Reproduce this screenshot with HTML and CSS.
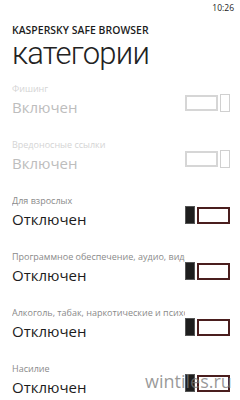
FILE: index.html
```
<!DOCTYPE html>
<html>
<head>
<meta charset="utf-8">
<link rel="stylesheet" href="styles.css">
</head>
<body>
<div class="screen">
  <div class="status">10:26</div>
  <div class="app-title">KASPERSKY SAFE BROWSER</div>
  <div class="page-title">категории</div>
  <div class="list">
    <div class="row disabled">
      <div class="label">Фишинг</div>
      <div class="value">Включен</div>
      <div class="toggle on"><span class="track"></span><span class="thumb"></span></div>
    </div>
    <div class="row disabled">
      <div class="label">Вредоносные ссылки</div>
      <div class="value">Включен</div>
      <div class="toggle on"><span class="track"></span><span class="thumb"></span></div>
    </div>
    <div class="row">
      <div class="label">Для взрослых</div>
      <div class="value">Отключен</div>
      <div class="toggle off"><span class="thumb"></span><span class="track"></span></div>
    </div>
    <div class="row">
      <div class="label">Программное обеспечение, аудио, видео</div>
      <div class="value">Отключен</div>
      <div class="toggle off"><span class="thumb"></span><span class="track"></span></div>
    </div>
    <div class="row">
      <div class="label">Алкоголь, табак, наркотические и психотропные вещества</div>
      <div class="value">Отключен</div>
      <div class="toggle off"><span class="thumb"></span><span class="track"></span></div>
    </div>
    <div class="row">
      <div class="label">Насилие</div>
      <div class="value">Отключен</div>
      <div class="toggle off"><span class="thumb"></span><span class="track"></span></div>
    </div>
  </div>
  <div class="watermark">wintiles.ru</div>
</div>
</body>
</html>
```
FILE: styles.css
```
html, body {
  margin: 0;
  padding: 0;
  background: #ffffff;
}
.screen {
  position: relative;
  width: 240px;
  height: 400px;
  overflow: hidden;
  font-family: "Open Sans", "Noto Sans", sans-serif;
  color: #1c1c1c;
}
.status {
  height: 16px;
  line-height: 16px;
  font-size: 8.5px;
  text-align: right;
  padding-right: 6px;
  color: #222;
}
.app-title {
  margin-top: 7px;
  padding-left: 12px;
  font-size: 10.4px;
  font-weight: 600;
  line-height: 14px;
  letter-spacing: 0.05px;
}
.page-title {
  padding-left: 12px;
  font-family: "Roboto", "Open Sans", sans-serif;
  font-size: 31px;
  font-weight: 300;
  line-height: 34px;
  margin-top: 0;
  letter-spacing: -0.8px;
  color: #222;
}
.list {
  margin-top: 11px;
  padding-left: 12px;
}
.row {
  display: grid;
  grid-template-columns: 173px 45px;
  grid-template-rows: 13px 24px;
  height: 56px;
}
.label {
  grid-column: 1;
  grid-row: 1;
  font-size: 9px;
  line-height: 13px;
  color: #8a8a8a;
  white-space: nowrap;
  overflow: hidden;
}
.value {
  grid-column: 1;
  grid-row: 2;
  font-size: 15px;
  line-height: 24px;
  color: #1c1c1c;
}
.disabled .label {
  color: #d4d4d4;
}
.disabled .value {
  color: #bdbdbd;
}
.toggle {
  grid-column: 2;
  grid-row: 2;
  display: flex;
  align-items: center;
  gap: 2px;
  height: 18px;
  margin-top: -1px;
}
.toggle .thumb {
  box-sizing: border-box;
  width: 10px;
  height: 18px;
}
.toggle .track {
  box-sizing: border-box;
  width: 33px;
  height: 16px;
}
.toggle.on .track {
  border: 2px solid #d6d6d6;
}
.toggle.on .thumb {
  border: 1.5px solid #d0d0d0;
  background: #fff;
}
.toggle.off .thumb {
  background: #1e1e1e;
  border: 1px solid #555;
}
.toggle.off .track {
  border: 2px solid #4a1e1e;
  background: #fff;
  height: 17px;
}
.watermark {
  position: absolute;
  left: 145px;
  top: 369px;
  font-size: 18px;
  font-family: "Open Sans", "Noto Sans", sans-serif;
  color: rgba(120, 120, 120, 0.75);
  line-height: 24px;
}
```
